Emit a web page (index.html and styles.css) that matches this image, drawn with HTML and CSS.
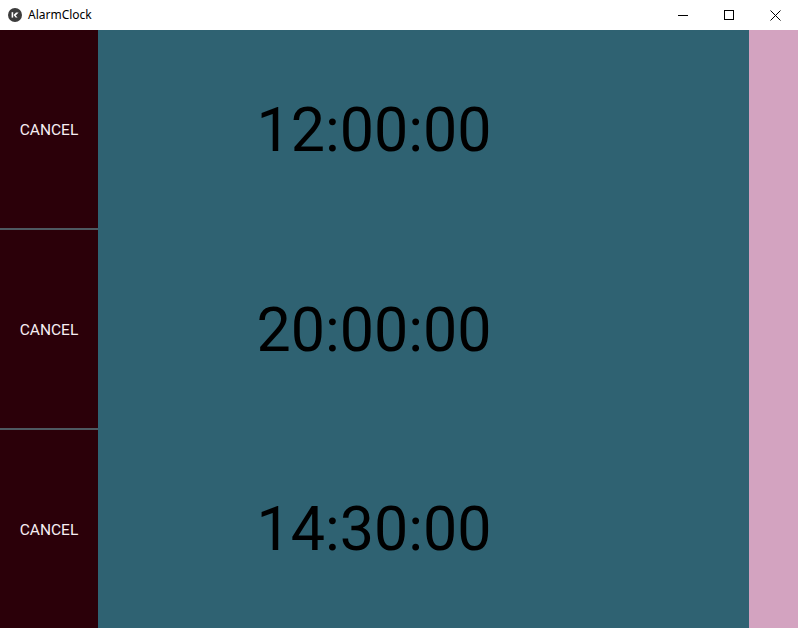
FILE: index.html
```html
<!DOCTYPE html>
<html>
<head>
<meta charset="utf-8">
<link rel="stylesheet" href="styles.css">
</head>
<body>
<div class="window">
  <div class="titlebar">
    <div class="app">
      <svg class="logo" width="14" height="14" viewBox="0 0 14 14">
        <circle cx="7" cy="7" r="7" fill="#3c3c3c"/>
        <path d="M3.6 4.2 L5.2 4.2 L5.2 9.6 L3.6 9.6 Z" fill="#fff"/>
        <path d="M5.6 7 L8 4.6 L10.6 4.6 L7.6 7.4 L9.6 9.6 L7.6 9.6 Z" fill="#fff"/>
      </svg>
      <span class="title">AlarmClock</span>
    </div>
    <div class="controls">
      <div class="ctl"><svg width="10" height="10" viewBox="0 0 10 10"><path d="M0 5.5 H10" stroke="#000" stroke-width="1"/></svg></div>
      <div class="ctl"><svg width="10" height="10" viewBox="0 0 10 10"><rect x="0.5" y="0.5" width="9" height="9" fill="none" stroke="#000" stroke-width="1"/></svg></div>
      <div class="ctl"><svg width="11" height="11" viewBox="0 0 11 11"><path d="M0.5 0.5 L10.5 10.5 M10.5 0.5 L0.5 10.5" stroke="#000" stroke-width="1"/></svg></div>
    </div>
  </div>
  <div class="main">
    <div class="buttons">
      <div class="cancel sep">CANCEL</div>
      <div class="cancel sep">CANCEL</div>
      <div class="cancel last">CANCEL</div>
    </div>
    <div class="times">
      <div class="time">12:00:00</div>
      <div class="time">20:00:00</div>
      <div class="time last">14:30:00</div>
    </div>
    <div class="side"></div>
  </div>
</div>
</body>
</html>
```
FILE: styles.css
```css
html, body {
  margin: 0;
  padding: 0;
}
body {
  width: 798px;
  height: 628px;
  overflow: hidden;
  background: #fff;
}
.window {
  display: flex;
  flex-direction: column;
  width: 798px;
  height: 628px;
}
.titlebar {
  height: 30px;
  display: flex;
  justify-content: space-between;
  align-items: center;
  background: #fff;
}
.app {
  display: flex;
  align-items: center;
  padding-left: 8px;
  gap: 6px;
}
.logo {
  display: block;
}
.title {
  font-family: "Noto Sans", "Open Sans", sans-serif;
  font-size: 12px;
  color: #000;
  position: relative;
  top: -1px;
}
.controls {
  display: flex;
  height: 30px;
}
.ctl {
  width: 46px;
  height: 30px;
  display: flex;
  align-items: center;
  justify-content: center;
}
.main {
  display: flex;
  height: 598px;
}
.buttons {
  width: 98px;
  display: flex;
  flex-direction: column;
  background: #2b0009;
}
.cancel {
  height: 200px;
  display: flex;
  align-items: center;
  justify-content: center;
  font-family: Roboto, sans-serif;
  font-size: 15.5px;
  color: #f6eef2;
  box-sizing: border-box;
  padding-top: 2px;
}
.cancel.sep {
  border-bottom: 2px solid #4e5961;
}
.cancel.last {
  height: 198px;
}
.times {
  width: 651px;
  background: #2f6272;
  display: flex;
  flex-direction: column;
}
.time {
  height: 200px;
  width: 552px;
  display: flex;
  align-items: center;
  justify-content: center;
  font-family: Roboto, sans-serif;
  font-size: 61px;
  color: #000;
}
.time.last {
  height: 198px;
}
.side {
  flex: 1;
  background: #d3a3c0;
}
```
